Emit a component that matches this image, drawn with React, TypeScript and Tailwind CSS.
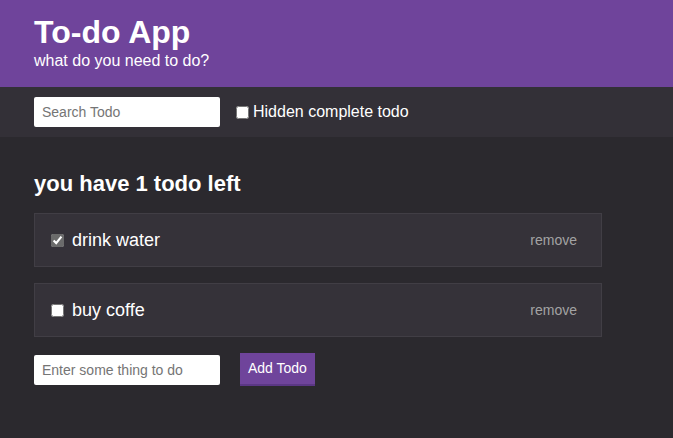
import { useState } from "react";

type Todo = { id: number; text: string; completed: boolean };

export default function App() {
  const [todos, setTodos] = useState<Todo[]>([
    { id: 1, text: "drink water", completed: true },
    { id: 2, text: "buy coffe", completed: false },
  ]);
  const [search, setSearch] = useState("");
  const [hideCompleted, setHideCompleted] = useState(false);
  const [newTodo, setNewTodo] = useState("");

  const left = todos.filter((t) => !t.completed).length;
  const visible = todos.filter(
    (t) =>
      t.text.toLowerCase().includes(search.toLowerCase()) &&
      (!hideCompleted || !t.completed)
  );

  const addTodo = () => {
    if (!newTodo.trim()) return;
    setTodos([...todos, { id: Date.now(), text: newTodo.trim(), completed: false }]);
    setNewTodo("");
  };

  return (
    <div
      className="min-h-[438px] bg-[#2b292e] text-white"
      style={{ fontFamily: '"Liberation Sans", Arial, sans-serif' }}
    >
      {/* Header */}
      <div className="bg-[#6f449b] px-[34px] pt-[13px] h-[87px]">
        <h1 className="text-[32px] font-bold leading-[38px]">To-do App</h1>
        <p className="text-[16px] leading-[20px]">what do you need to do?</p>
      </div>

      {/* Filters */}
      <div className="bg-[#333037] h-[50px] px-[34px] flex items-center">
        <input
          type="text"
          placeholder="Search Todo"
          value={search}
          onChange={(e) => setSearch(e.target.value)}
          className="w-[186px] h-[30px] bg-white rounded-[2px] px-[8px] text-[14px] text-[#333] placeholder:text-[#757575] outline-none"
        />
        <label className="ml-[16px] flex items-center text-[16px]">
          <input
            type="checkbox"
            checked={hideCompleted}
            onChange={(e) => setHideCompleted(e.target.checked)}
            className="w-[13px] h-[13px] mr-[4px]"
          />
          Hidden complete todo
        </label>
      </div>

      {/* Main */}
      <div className="px-[34px] pt-[34px]">
        <h2 className="text-[22px] font-bold leading-[26px] mb-[16px]">
          you have {left} todo left
        </h2>

        <div className="w-[568px] flex flex-col gap-[16px]">
          {visible.map((t) => (
            <div
              key={t.id}
              className="h-[54px] bg-[#353239] border border-[#413e45] flex items-center pl-[16px] pr-[24px]"
            >
              <input
                type="checkbox"
                checked={t.completed}
                onChange={() =>
                  setTodos(todos.map((x) => (x.id === t.id ? { ...x, completed: !x.completed } : x)))
                }
                className="w-[13px] h-[13px] mr-[8px] accent-[#6b6b6b]"
              />
              <span className="text-[18px] flex-1">{t.text}</span>
              <button
                onClick={() => setTodos(todos.filter((x) => x.id !== t.id))}
                className="text-[14px] text-[#a3a3a3]"
              >
                remove
              </button>
            </div>
          ))}
        </div>

        <div className="flex items-center mt-[16px]">
          <input
            type="text"
            placeholder="Enter some thing to do"
            value={newTodo}
            onChange={(e) => setNewTodo(e.target.value)}
            className="w-[186px] h-[30px] bg-white rounded-[2px] px-[8px] text-[14px] text-[#333] placeholder:text-[#757575] outline-none"
          />
          <button
            onClick={addTodo}
            className="ml-[20px] h-[33px] px-[8px] bg-[#6f449b] border-b-2 border-[#5b3785] text-[14px] text-white"
          >
            Add Todo
          </button>
        </div>
      </div>
    </div>
  );
}
